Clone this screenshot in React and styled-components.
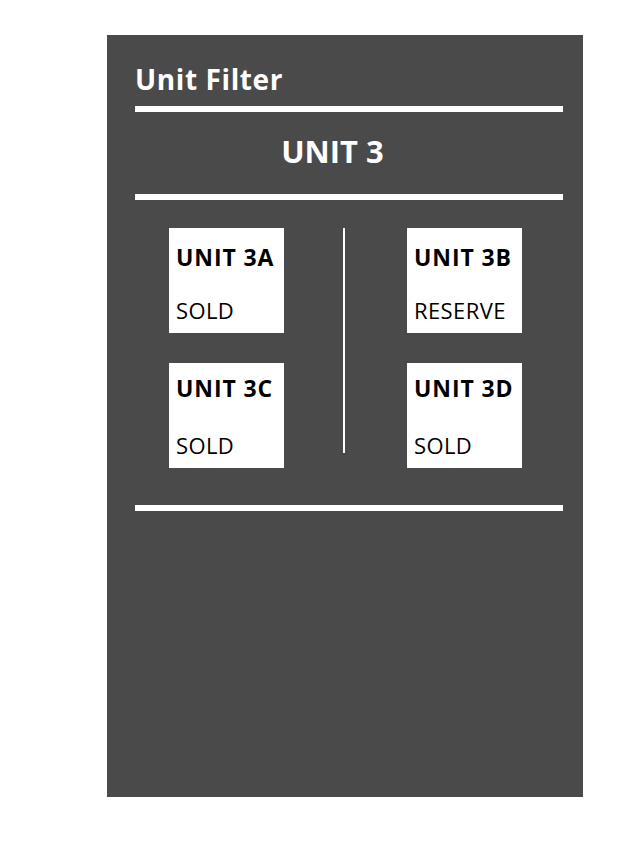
import React from "react";
import styled, { createGlobalStyle } from "styled-components";

const GlobalStyle = createGlobalStyle`
  body {
    margin: 0;
    background: #ffffff;
    font-family: "Open Sans", "Liberation Sans", sans-serif;
  }
`;

//styled comp
const Page = styled.div`
  padding: 35px 0 0 107px;
`;

const Panel = styled.div`
  width: 428px;
  height: 732px;
  padding: 30px 20px 0 28px;
  background: #4a4a4a;
`;

const Title = styled.h2`
  margin: 0 0 13px;
  font-size: 28px;
  line-height: 1;
  font-weight: 700;
  letter-spacing: 0.6px;
  color: #ffffff;
`;

const Divider = styled.div`
  height: 6px;
  background: #ffffff;
`;

const UnitName = styled.h3`
  margin: 24px 0 27px;
  padding-right: 33px;
  text-align: center;
  font-size: 31px;
  line-height: 1;
  font-weight: 700;
  color: #ffffff;
`;

const UnitGrid = styled.div`
  display: flex;
  align-items: flex-start;
  padding: 28px 0 37px 34px;
`;

const Column = styled.div`
  display: flex;
  flex-direction: column;
  gap: 30px;
`;

const Separator = styled.div`
  width: 2px;
  height: 225px;
  margin: 0 62px 0 59px;
  background: #ffffff;
`;

const Card = styled.div`
  display: flex;
  flex-direction: column;
  box-sizing: border-box;
  width: 115px;
  height: 105px;
  padding: ${(p) => (p.$low ? "14px" : "18px")} 7px 0;
  background: #ffffff;
  color: #000000;
`;

const CardName = styled.div`
  font-size: 23px;
  line-height: 1;
  font-weight: 700;
  letter-spacing: 0.9px;
  white-space: nowrap;
`;

const CardStatus = styled.div`
  margin-top: ${(p) => (p.$low ? "34px" : "30px")};
  font-size: 22px;
  line-height: 1;
  font-weight: 400;
  letter-spacing: 0.4px;
  white-space: nowrap;
`;

const units = {
  left: [
    { name: "UNIT 3A", status: "SOLD" },
    { name: "UNIT 3C", status: "SOLD", low: true },
  ],
  right: [
    { name: "UNIT 3B", status: "RESERVE" },
    { name: "UNIT 3D", status: "SOLD", low: true },
  ],
};

const UnitCard = ({ name, status, low }) => (
  <Card $low={low}>
    <CardName>{name}</CardName>
    <CardStatus $low={low}>{status}</CardStatus>
  </Card>
);

const App = () => {
  return (
    <Page>
      <GlobalStyle />
      <Panel>
        <Title>Unit Filter</Title>
        <Divider />
        <UnitName>UNIT 3</UnitName>
        <Divider />
        <UnitGrid>
          <Column>
            {units.left.map((u) => (
              <UnitCard key={u.name} {...u} />
            ))}
          </Column>
          <Separator />
          <Column>
            {units.right.map((u) => (
              <UnitCard key={u.name} {...u} />
            ))}
          </Column>
        </UnitGrid>
        <Divider />
      </Panel>
    </Page>
  );
};

export default App;
